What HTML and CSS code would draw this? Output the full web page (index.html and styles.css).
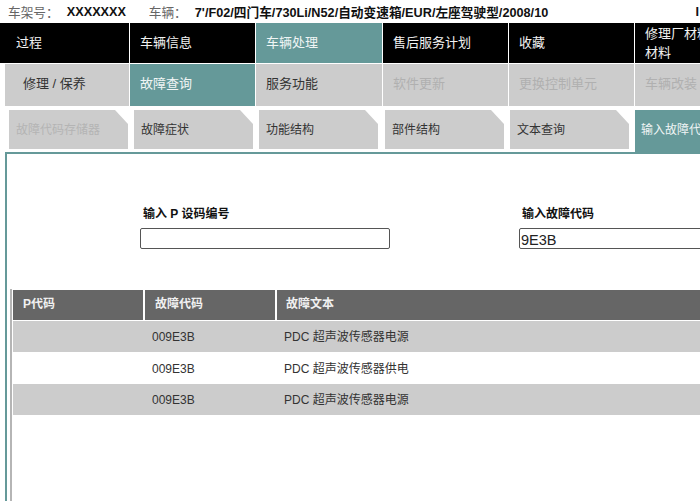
FILE: index.html
```html
<!DOCTYPE html>
<html lang="zh">
<head>
<meta charset="utf-8">
<title>故障查询</title>
<link rel="stylesheet" href="styles.css">
</head>
<body>
<div class="page">
  <div class="info">
    <span class="info-label">车架号：</span><span class="info-vin">XXXXXXX</span>
    <span class="info-label info-car">车辆：</span><span class="info-val">7'/F02/四门车/730Li/N52/自动变速箱/EUR/左座驾驶型/2008/10</span>
    <span class="info-end">I</span>
  </div>
  <div class="nav nav-main">
    <div class="cell black first">过程</div>
    <div class="cell black">车辆信息</div>
    <div class="cell teal">车辆处理</div>
    <div class="cell black">售后服务计划</div>
    <div class="cell black">收藏</div>
    <div class="cell black wrap">修理厂材料<br>材料</div>
  </div>
  <div class="nav nav-sub">
    <div class="cell grey first">修理 / 保养</div>
    <div class="cell teal">故障查询</div>
    <div class="cell grey dark">服务功能</div>
    <div class="cell grey off">软件更新</div>
    <div class="cell grey off">更换控制单元</div>
    <div class="cell grey off">车辆改装</div>
  </div>
  <div class="tabs">
    <div class="tab off">故障代码存储器</div>
    <div class="tab">故障症状</div>
    <div class="tab">功能结构</div>
    <div class="tab">部件结构</div>
    <div class="tab">文本查询</div>
    <div class="tab active">输入故障代码</div>
  </div>
  <div class="panel">
    <div class="form">
      <div class="field field-p">
        <label class="field-label">输入 P 设码编号</label>
        <div class="input"></div>
      </div>
      <div class="field field-code">
        <label class="field-label">输入故障代码</label>
        <div class="input">9E3B</div>
      </div>
    </div>
    <div class="table">
      <div class="row head">
        <div class="c c1">P代码</div>
        <div class="c c2">故障代码</div>
        <div class="c c3">故障文本</div>
      </div>
      <div class="row shade">
        <div class="c c1"></div>
        <div class="c c2">009E3B</div>
        <div class="c c3">PDC 超声波传感器电源</div>
      </div>
      <div class="row">
        <div class="c c1"></div>
        <div class="c c2">009E3B</div>
        <div class="c c3">PDC 超声波传感器供电</div>
      </div>
      <div class="row shade">
        <div class="c c1"></div>
        <div class="c c2">009E3B</div>
        <div class="c c3">PDC 超声波传感器电源</div>
      </div>
    </div>
  </div>
</div>
</body>
</html>
```
FILE: styles.css
```css
* { box-sizing: border-box; }
html, body { margin: 0; padding: 0; height: 100%; overflow: hidden; background: #fff; }
body { font-family: "Liberation Sans", "Noto Sans CJK SC", sans-serif; font-size: 13px; color: #222; }
.page { width: 700px; height: 501px; overflow: hidden; display: flex; flex-direction: column; }

.info { height: 23px; padding-left: 8px; display: flex; align-items: center; font-size: 12.7px; white-space: nowrap; }
.info-label { color: #666; }
.info-vin { font-weight: bold; color: #111; margin-left: 8px; width: 82px; }
.info-car { margin-right: 8px; }
.info-val { font-weight: bold; color: #111; }
.info-end { margin-left: auto; font-weight: bold; color: #111; padding-right: 1px; }

.nav { display: grid; grid-template-columns: 130px 126px 127px 126px 126px 126px; width: 761px; }
.nav-main { height: 40px; }
.nav-sub { height: 42px; margin-top: 1px; }
.cell { display: flex; align-items: center; padding-left: 10px; margin-right: 1px; padding-bottom: 3px; }
.black { background: #000; color: #f2f2f2; }
.teal { background: #659999; color: #f0f5f5; }
.grey { background: #cccccc; color: #333; }
.grey.off { color: #b0b0b0; }
.nav-sub .cell { padding-bottom: 5px; }
.nav-main .first { padding-left: 16px; }
.nav-sub .first { margin-left: 5px; padding-left: 18px; }
.wrap { line-height: 19px; padding-bottom: 1px; }

.tabs { display: grid; grid-template-columns: 125px 125px 126px 125px 125px 126px; margin-top: 4px; padding-left: 9px; width: 800px; height: 43px; }
.tab { height: 39px; width: 119px; background: #cccccc; display: flex; align-items: center; padding: 0 0 2px 7px; font-size: 12px; color: #333;
  clip-path: polygon(0 0, 106px 0, 100% 14px, 100% 100%, 0 100%); }
.tab.off { color: #b4b4b4; }
.tab.active { height: 43px; width: 140px; padding: 0 0 6px 6px; background: #659999; color: #f0f5f5; clip-path: none; }

.panel { flex: 1; margin-left: 5px; margin-top: -1px; border-top: 2px solid #659999; border-left: 2px solid #659999; padding-left: 3px; display: flex; flex-direction: column; min-height: 0; position: relative; }
.form { height: 134px; display: flex; padding-left: 130px; flex: none; }
.field { padding-top: 52px; flex: none; }
.field-p { width: 379px; }
.field-code { width: 300px; }
.field-label { display: block; font-size: 12px; font-weight: bold; color: #111; margin-left: 3px; line-height: 16px; }
.input { margin-top: 6px; height: 21px; border: 1px solid #555; border-radius: 2px; background: #fff; font-size: 14.5px; line-height: 22px; padding-left: 1px; color: #222; }
.field-p .input { width: 250px; }
.field-code .input { width: 300px; }

.table { flex: 1; border-left: 2px solid #b5b5b5; padding-left: 1px; margin-top: 1px; width: 700px; position: relative; }
.row { display: grid; grid-template-columns: 130px 2px 130px 2px 1fr; height: 31px; align-items: center; font-size: 12px; line-height: 16px; color: #333; }
.row .c1 { grid-column: 1; }
.row .c2 { grid-column: 3; padding-left: 7px; }
.row .c3 { grid-column: 5; padding-left: 7px; }
.shade { background: #cccccc; height: 31px; margin-bottom: 1px; }
.head { height: 30px; margin-top: 1px; margin-bottom: 1px; padding-bottom: 3px; background: linear-gradient(#666, #666) 0 0 / 130px 100% no-repeat, linear-gradient(#666, #666) 132px 0 / 130px 100% no-repeat, linear-gradient(#666, #666) 264px 0 / 100% 100% no-repeat; font-weight: bold; color: #f0f0f0; }
.head .c1 { padding-left: 10px; }
.head .c2 { padding-left: 10px; }
.head .c3 { padding-left: 9px; }
```
